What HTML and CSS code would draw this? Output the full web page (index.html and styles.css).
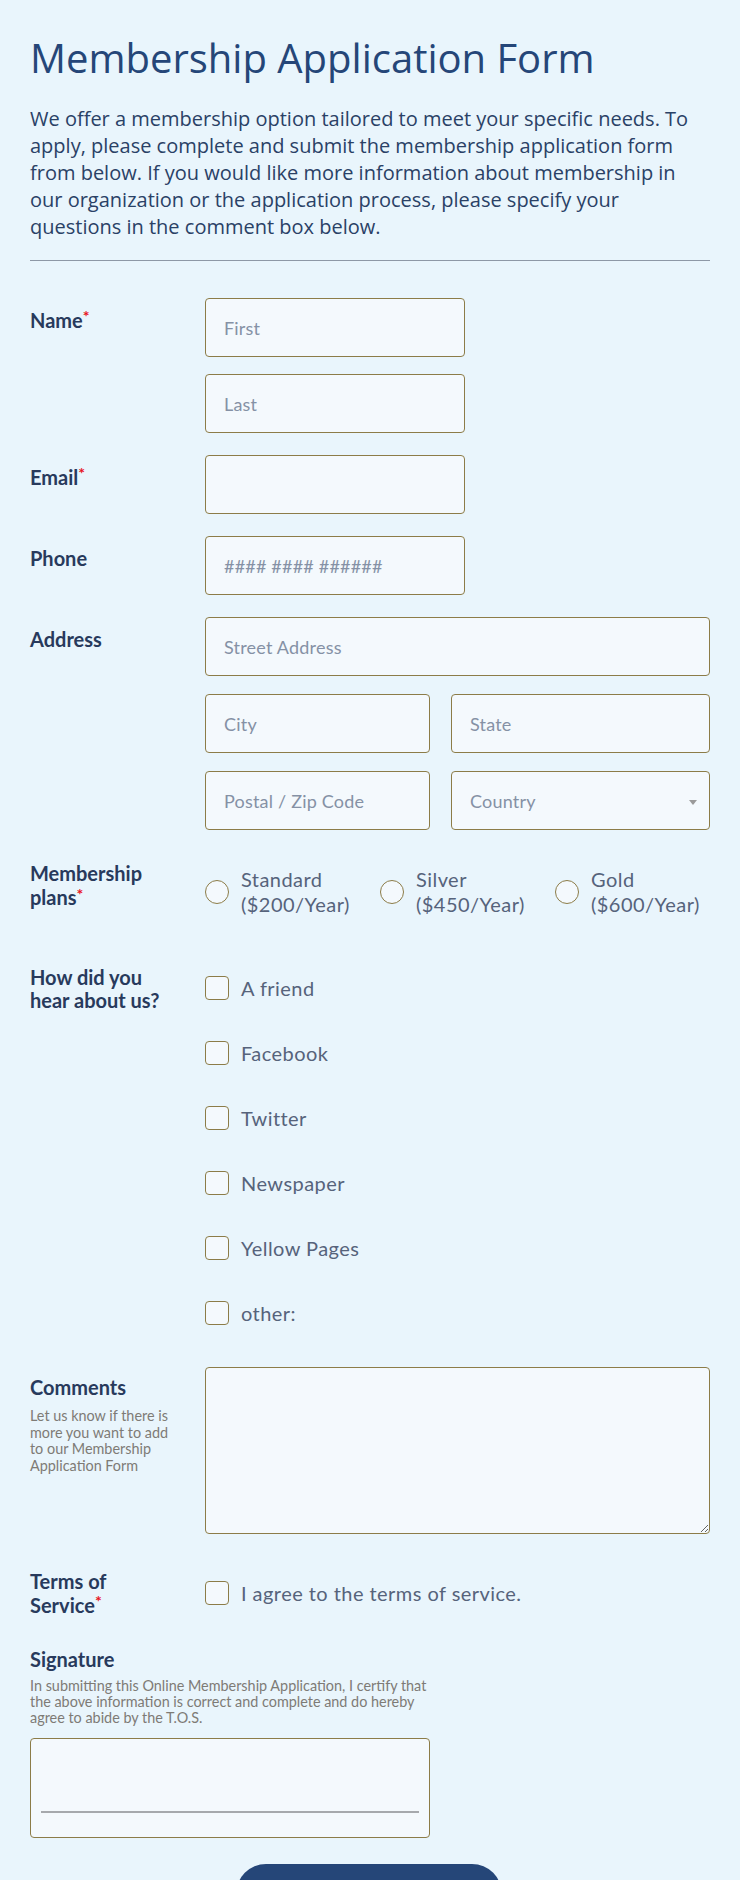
FILE: index.html
```html
<!DOCTYPE html>
<html lang="en">
<head>
<meta charset="utf-8">
<title>Membership Application Form</title>
<link rel="stylesheet" href="styles.css">
</head>
<body>
<div class="page">
  <h1 class="title">Membership Application Form</h1>
  <p class="desc">We offer a membership option tailored to meet your specific needs. To apply, please complete and submit the membership application form from below. If you would like more information about membership in our organization or the application process, please specify your questions in the comment box below.</p>
  <hr class="divider">

  <form class="form">
    <div class="row">
      <label class="label">Name<span class="req">*</span></label>
      <div class="stack">
        <input class="input short" type="text" placeholder="First">
        <input class="input short" type="text" placeholder="Last">
      </div>
    </div>

    <div class="row">
      <label class="label">Email<span class="req">*</span></label>
      <div class="stack">
        <input class="input short" type="email">
      </div>
    </div>

    <div class="row">
      <label class="label">Phone</label>
      <div class="stack">
        <input class="input short" type="tel" placeholder="#### #### ######">
      </div>
    </div>

    <div class="row">
      <label class="label">Address</label>
      <div class="address">
        <input class="input full span2" type="text" placeholder="Street Address">
        <input class="input full" type="text" placeholder="City">
        <input class="input full" type="text" placeholder="State">
        <input class="input full" type="text" placeholder="Postal / Zip Code">
        <div class="select-wrap">
          <select class="input full select">
            <option>Country</option>
          </select>
        </div>
      </div>
    </div>

    <div class="row">
      <label class="label label-wrap">Membership plans<span class="req">*</span></label>
      <div class="radios">
        <label class="option"><input class="radio" type="radio" name="plan"><span class="opt-text">Standard<br>($200/Year)</span></label>
        <label class="option"><input class="radio" type="radio" name="plan"><span class="opt-text">Silver<br>($450/Year)</span></label>
        <label class="option"><input class="radio" type="radio" name="plan"><span class="opt-text">Gold<br>($600/Year)</span></label>
      </div>
    </div>

    <div class="row">
      <label class="label label-wrap">How did you hear about us?</label>
      <div class="checks">
        <label class="option"><input class="check" type="checkbox"><span class="opt-text">A friend</span></label>
        <label class="option"><input class="check" type="checkbox"><span class="opt-text">Facebook</span></label>
        <label class="option"><input class="check" type="checkbox"><span class="opt-text">Twitter</span></label>
        <label class="option"><input class="check" type="checkbox"><span class="opt-text">Newspaper</span></label>
        <label class="option"><input class="check" type="checkbox"><span class="opt-text">Yellow Pages</span></label>
        <label class="option"><input class="check" type="checkbox"><span class="opt-text">other:</span></label>
      </div>
    </div>

    <div class="row">
      <div class="label-block">
        <label class="label label-tight">Comments</label>
        <p class="sublabel">Let us know if there is more you want to add to our Membership Application Form</p>
      </div>
      <textarea class="input textarea"></textarea>
    </div>

    <div class="row row-terms">
      <label class="label label-wrap">Terms of Service<span class="req">*</span></label>
      <div class="terms">
        <label class="option"><input class="check" type="checkbox"><span class="opt-text">I agree to the terms of service.</span></label>
      </div>
    </div>

    <div class="signature">
      <div class="label sig-label">Signature</div>
      <p class="sublabel sig-sub">In submitting this Online Membership Application, I certify that the above information is correct and complete and do hereby agree to abide by the T.O.S.</p>
      <div class="sig-box"><div class="sig-line"></div></div>
    </div>

    <div class="actions">
      <button class="submit" type="button">Submit</button>
    </div>
  </form>
</div>
</body>
</html>
```

FILE: styles.css
```css
* {
  box-sizing: border-box;
}

body {
  margin: 0;
  background: #e9f5fc;
}

.page {
  padding: 0 30px;
}

.title {
  margin: 34px 0 0;
  font-family: "Open Sans", "Noto Sans", sans-serif;
  font-weight: 400;
  font-size: 40px;
  line-height: 48px;
  color: #254678;
}

.desc {
  margin: 23px 0 0;
  font-family: "Open Sans", "Noto Sans", sans-serif;
  font-size: 20px;
  line-height: 27px;
  color: #2a4166;
}

.divider {
  margin: 20px 0 0;
  border: 0;
  border-top: 1px solid #8d98a6;
  height: 0;
}

.form {
  margin-top: 26px;
  font-family: Lato, "Noto Sans", sans-serif;
}

.row {
  display: grid;
  grid-template-columns: 175px 1fr;
  padding: 11px 0;
}

.label {
  display: block;
  padding-top: 10px;
  max-width: 150px;
  font-size: 20px;
  line-height: 24px;
  font-weight: 700;
  color: #283a5c;
}

.label-wrap {
  line-height: 23.5px;
}

.label-tight {
  padding-top: 8px;
}

.req {
  color: #e8141c;
  font-size: 16px;
  vertical-align: top;
  line-height: 16px;
}

.stack {
  display: flex;
  flex-direction: column;
  gap: 17px;
}

.input {
  display: block;
  height: 59px;
  border: 1px solid #8c7c48;
  border-radius: 4px;
  background: #f4f9fd;
  padding: 0 18px;
  font-family: Lato, "Noto Sans", sans-serif;
  font-size: 18px;
  letter-spacing: 0.2px;
  color: #3c4b66;
  outline: none;
}

.input::placeholder {
  color: #8591a5;
}

.short {
  width: 260px;
}

.full {
  width: 100%;
}

.address {
  display: grid;
  grid-template-columns: 225px 1fr;
  gap: 18px 21px;
}

.span2 {
  grid-column: span 2;
}

.select-wrap {
  position: relative;
}

.select {
  appearance: none;
  -webkit-appearance: none;
  color: #8591a5;
}

.select-wrap::after {
  content: "";
  position: absolute;
  right: 13px;
  top: 29px;
  border-left: 4.5px solid transparent;
  border-right: 4.5px solid transparent;
  border-top: 5px solid #9a9a9a;
}

.radios {
  display: grid;
  grid-template-columns: 175px 175px 1fr;
  padding: 15px 0 16.5px;
}

.option {
  display: flex;
  align-items: center;
  gap: 12px;
  font-size: 20px;
  line-height: 25px;
  letter-spacing: 0.45px;
  color: #56637b;
  font-weight: 400;
}

.opt-text {
  display: block;
}

.radio,
.check {
  appearance: none;
  -webkit-appearance: none;
  flex: none;
  margin: 0;
  width: 24px;
  height: 24px;
  border: 1px solid #8c7c48;
  background: #f4f9fd;
}

.radio {
  border-radius: 50%;
}

.check {
  border-radius: 4px;
}

.checks {
  display: flex;
  flex-direction: column;
  gap: 40px;
  padding: 20px 0 19px;
}

.checks .option {
  height: 25px;
}

.label-block {
  display: block;
}

.sublabel {
  margin: 9.5px 0 0;
  max-width: 150px;
  font-size: 14.4px;
  line-height: 16.5px;
  color: #7e7b76;
}

.textarea {
  width: 100%;
  height: 167px;
  resize: vertical;
}

.row-terms {
  padding-top: 12px;
}

.row-terms .label {
  line-height: 24px;
  padding-top: 12px;
}

.terms {
  padding-top: 24px;
}

.signature {
  padding-top: 19px;
}

.sig-label {
  padding-top: 0;
  max-width: none;
}

.sig-sub {
  max-width: 405px;
  margin-top: 7px;
  line-height: 16px;
}

.sig-box {
  margin-top: 12.5px;
  width: 400px;
  height: 100px;
  border: 1px solid #8c7c48;
  border-radius: 4px;
  background: #f4f9fd;
  padding: 72px 10px 0;
}

.sig-line {
  height: 2px;
  background: #a6a9ad;
}

.actions {
  display: flex;
  justify-content: center;
  padding: 26px 0 40px;
}

.submit {
  width: 266px;
  height: 60px;
  margin-left: -2px;
  border: 0;
  border-radius: 30px;
  background: #254678;
  color: #fff;
  font-family: Lato, sans-serif;
  font-size: 20px;
  font-weight: 700;
}
```
